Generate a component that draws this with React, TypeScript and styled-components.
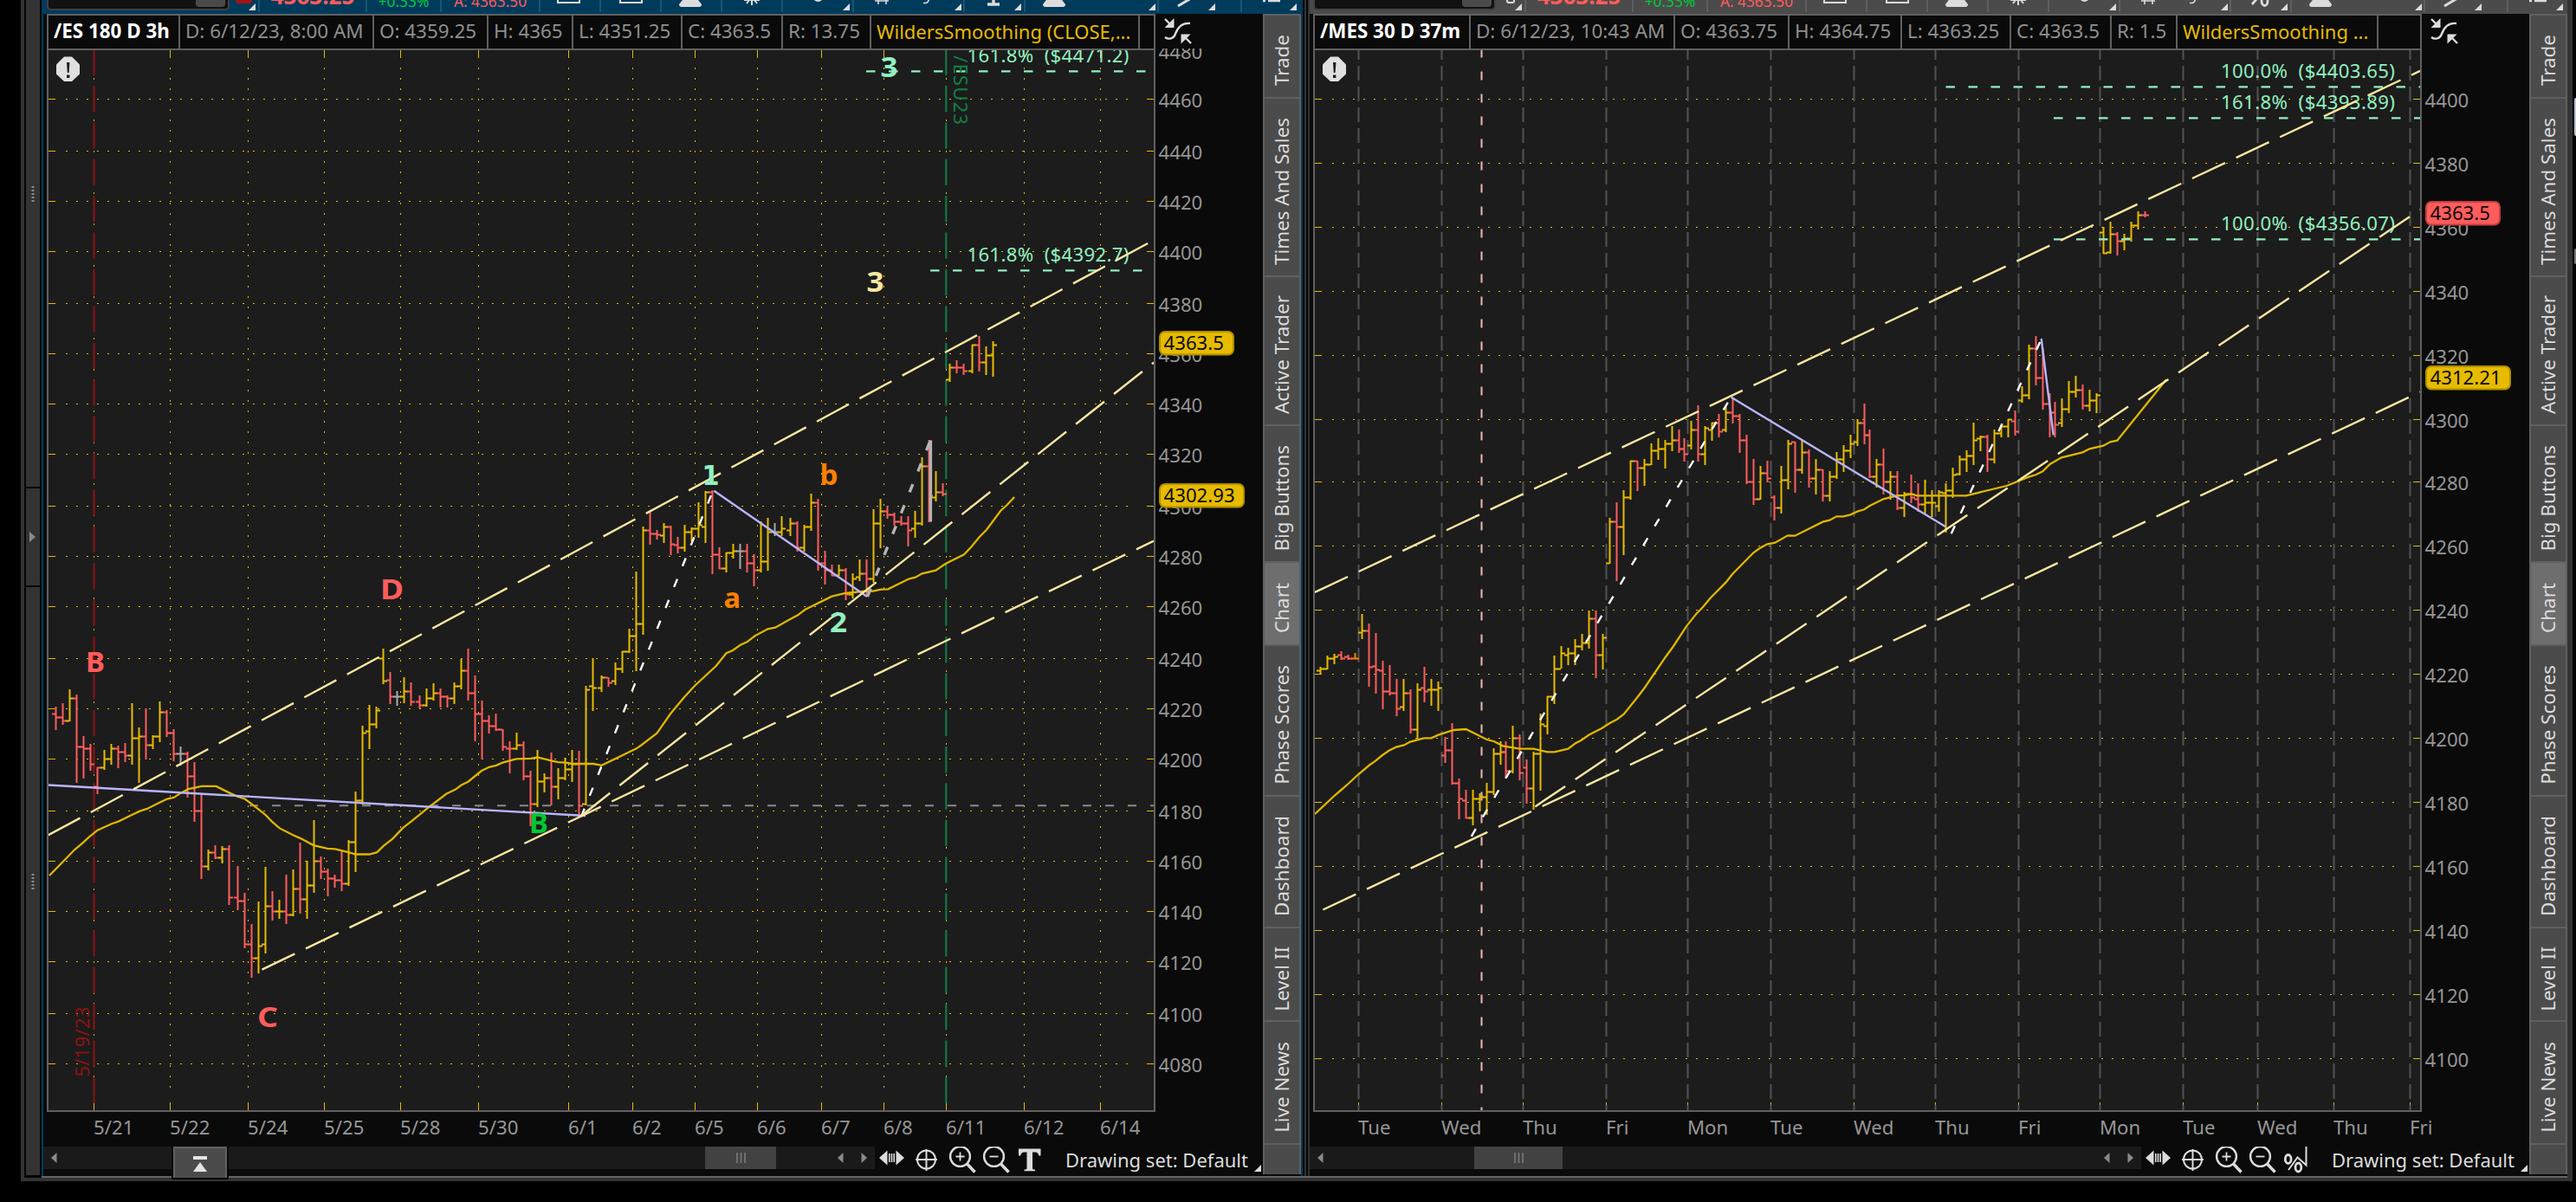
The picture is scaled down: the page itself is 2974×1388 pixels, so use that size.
import React from 'react'
import styled, { createGlobalStyle } from 'styled-components'

const GOLD = '#e6bb00'
const RED = '#ff5c5c'
const MINT = '#90f0c0'
const CREAM = '#f8e7a0'
const LILAC = '#b9b5ff'

const GlobalStyle = createGlobalStyle`
  body {
    margin: 0;
    background: #000;
    font-family: "Noto Sans", "Open Sans", sans-serif;
    overflow: hidden;
  }
`

const Screen = styled.div`
  display: flex;
  width: 2974px;
  height: 1388px;
  padding-left: 24px;
  box-sizing: border-box;
  background: #000;
`

const Frame = styled.div`
  display: flex;
  box-sizing: border-box;
  width: 2946px;
  height: 1364px;
  padding-left: 2px;
  border: solid #333;
  border-width: 0 6px 4px 4px;
  background: #050505;
`

const EdgeColumn = styled.div`
  display: flex;
  flex-direction: column;
  gap: 130px;
  padding: 113px 0 0 2px;
`

const EdgePiece = styled.div<{ $h: number; $color: string }>`
  width: 2px;
  height: ${({ $h }) => $h}px;
  background: ${({ $color }) => $color};
  border-radius: 2px 0 0 2px;
`

const Strip = styled.div`
  display: flex;
  flex-direction: column;
  gap: 2px;
  width: 16px;
  height: 1357px;
  margin-right: 2px;
`

const StripPart = styled.div<{ $h: number; $pb?: number }>`
  display: flex;
  align-items: center;
  justify-content: center;
  box-sizing: border-box;
  height: ${({ $h }) => $h}px;
  padding-bottom: ${({ $pb = 0 }) => $pb}px;
  background: #333;
`

const Windows = styled.div`
  display: flex;
  height: 1358px;
  border-bottom: 2px solid #646464;
`

const Divider = styled.div`
  width: 8px;
  background: linear-gradient(90deg, #050505 0 2px, #333 2px 4px, #050505 4px 6px, #333 6px 8px);
`

const Window = styled.div<{ $active?: boolean }>`
  width: 1452px;
  border: solid #003b5c;
  border-width: ${({ $active }) => ($active ? '0 2px' : '0')};
  background: #0a0a0a;
`

const Toolbar = styled.div<{ $active?: boolean }>`
  --line: ${({ $active }) => ($active ? '#1c5374' : '#5e5e5e')};
  display: flex;
  height: 16px;
  padding-left: 4px;
  box-sizing: border-box;
  overflow: hidden;
  background: ${({ $active }) => ($active ? '#003b5c' : '#4b4b4b')};
`

const SymbolBox = styled.div`
  display: flex;
  justify-content: flex-end;
  box-sizing: border-box;
  width: 211px;
  height: 12px;
  padding-right: 3px;
  border: solid #424242;
  border-width: 0 2px 2px;
  border-radius: 0 0 5px 5px;
  background: #111;
`

const SymbolButton = styled.div`
  width: 34px;
  height: 8px;
  border-radius: 0 0 4px 4px;
  background: #4a4a4a;
`

const ToolCell = styled.div<{ $w: number; $last?: boolean }>`
  display: flex;
  align-items: flex-end;
  justify-content: center;
  box-sizing: border-box;
  width: ${({ $w }) => $w}px;
  height: 14px;
  overflow: hidden;
  border-right: ${({ $last }) => ($last ? 0 : 2)}px solid var(--line);
`

const Quote = styled.span<{ $size: number; $lift: number; $color: string; $bold?: boolean }>`
  flex: none;
  font-size: ${({ $size }) => $size}px;
  font-weight: ${({ $bold }) => ($bold ? 700 : 400)};
  line-height: 20px;
  margin-bottom: ${({ $lift }) => $lift}px;
  color: ${({ $color }) => $color};
  white-space: nowrap;
`

const Body = styled.div`
  display: flex;
`

const Main = styled.div`
  width: 1408px;
`

const HeaderRow = styled.div`
  display: flex;
  height: 40px;
  padding-left: 4px;
`

const HeaderBar = styled.div`
  display: flex;
  box-sizing: border-box;
  width: 1280px;
  border: 2px solid #606060;
  border-bottom: 0;
`

const HeaderCell = styled.div<{ $w: number; $kind?: 'title' | 'study' }>`
  box-sizing: border-box;
  width: ${({ $w }) => $w}px;
  padding-left: 6px;
  border-right: 2px solid #606060;
  font-size: ${({ $kind }) => ($kind === 'study' ? 22 : 22.4)}px;
  line-height: 36px;
  white-space: pre;
  overflow: hidden;
  font-weight: ${({ $kind }) => ($kind === 'title' ? 700 : 400)};
  color: ${({ $kind }) => ($kind === 'title' ? '#fff' : $kind === 'study' ? GOLD : '#8f8f8f')};
`

const CollapseIcon = styled.svg`
  margin: 4px 0 0 9px;
`

const ChartCanvas = styled.svg`
  display: block;
  margin-left: 4px;
`

const Tabs = styled.div`
  display: flex;
  flex-direction: column;
  box-sizing: border-box;
  width: 44px;
  height: 1340px;
  border: solid #606060;
  border-width: 2px 2px 0;
  background: #4b4b4b;
`

const Tab = styled.div<{ $h: number; $active?: boolean }>`
  display: flex;
  align-items: center;
  justify-content: center;
  box-sizing: border-box;
  height: ${({ $h }) => $h}px;
  padding-top: 10px;
  border-bottom: 2px solid #606060;
  background: ${({ $active }) => ($active ? '#6e6e6e' : '#4b4b4b')};
`

const TabLabel = styled.span`
  writing-mode: vertical-rl;
  transform: rotate(180deg);
  font-size: 22.4px;
  line-height: 40px;
  color: #dcdcdc;
  white-space: nowrap;
`

const BottomBar = styled.div`
  display: flex;
  height: 34px;
`

const ScrollTrack = styled.div`
  display: flex;
  align-items: center;
  width: 960px;
  height: 26px;
  background: #1a1a1a;
`

const Thumb = styled.div<{ $w: number; $ml: number }>`
  display: flex;
  align-items: center;
  justify-content: center;
  width: ${({ $w }) => $w}px;
  height: 26px;
  margin: 0 auto 0 ${({ $ml }) => $ml}px;
  background: #424242;
`

const ExpandButton = styled.div`
  display: flex;
  align-items: center;
  justify-content: center;
  align-self: flex-start;
  box-sizing: border-box;
  width: 62px;
  height: 36px;
  margin-left: 134px;
  border: 2px solid #606060;
  border-bottom: 0;
  outline: 2px solid #0a0a0a;
  background: #4b4b4b;
`

const ToolIcon = styled.svg<{ $ml: number }>`
  flex: none;
  margin-left: ${({ $ml }) => $ml}px;
`

const DrawingSet = styled.div`
  width: 218px;
  margin-left: 26px;
  padding-top: 1px;
  font-size: 22px;
  line-height: 28px;
  color: #dcdcdc;
  white-space: nowrap;
`

/* ---------- chart data: [x, high, low, open, close, tone] in canvas pixels ---------- */

type Tone = 'u' | 'd' | 'n' | 'o'
type Bar = [number, number, number, number, number, Tone]
type Seg = [number, number, number, number]

const TONES: Record<Tone, string> = { u: GOLD, d: RED, n: '#aaa', o: '#ff8000' }

const esBars: Bar[] = [
  [64, 816, 843, 824, 828, 'd'], [72, 812, 837, 828, 832, 'd'], [80, 796, 833, 832, 806, 'u'],
  [88, 802, 904, 806, 862, 'd'], [96, 850, 899, 862, 864, 'd'], [104, 859, 890, 864, 882, 'd'],
  [112, 886, 917, 908, 886, 'd'], [120, 866, 889, 886, 876, 'u'], [128, 859, 883, 876, 864, 'u'],
  [136, 861, 887, 864, 868, 'd'], [144, 858, 880, 868, 872, 'd'], [152, 812, 883, 872, 852, 'u'],
  [160, 840, 904, 852, 850, 'u'], [168, 818, 877, 850, 860, 'd'], [176, 849, 865, 860, 850, 'u'],
  [184, 810, 857, 850, 822, 'u'], [192, 820, 851, 822, 846, 'd'], [200, 842, 879, 846, 870, 'd'],
  [208, 862, 884, 870, 870, 'n'], [216, 868, 921, 870, 896, 'd'], [224, 880, 949, 896, 936, 'd'],
  [232, 917, 1015, 936, 1000, 'd'], [240, 981, 1005, 1000, 984, 'u'], [248, 976, 992, 984, 990, 'd'],
  [256, 977, 997, 990, 980, 'u'], [264, 976, 1045, 980, 1036, 'd'], [274, 1000, 1051, 1036, 1040, 'd'],
  [282, 1031, 1095, 1040, 1090, 'd'], [290, 1067, 1129, 1090, 1106, 'd'], [298, 1041, 1124, 1106, 1092, 'u'],
  [306, 1001, 1101, 1090, 1046, 'u'], [314, 1029, 1063, 1046, 1052, 'd'], [322, 1039, 1061, 1052, 1052, 'u'],
  [330, 1010, 1067, 1052, 1056, 'd'], [338, 1004, 1058, 1056, 1026, 'u'], [346, 973, 1055, 1026, 1038, 'd'],
  [354, 994, 1061, 1038, 1022, 'u'], [362, 947, 1031, 1022, 994, 'u'], [370, 989, 1015, 994, 1006, 'd'],
  [378, 1003, 1035, 1006, 1014, 'd'], [386, 1010, 1025, 1014, 1016, 'd'], [394, 983, 1029, 1016, 1020, 'd'],
  [402, 970, 1023, 1020, 972, 'u'], [410, 914, 1007, 972, 924, 'u'], [418, 838, 929, 924, 846, 'u'],
  [426, 814, 865, 844, 836, 'u'], [434, 816, 841, 836, 820, 'u'], [442, 749, 790, 760, 786, 'u'],
  [450, 776, 813, 785, 804, 'd'], [458, 798, 815, 804, 804, 'n'], [466, 782, 812, 804, 798, 'u'],
  [474, 788, 815, 798, 810, 'd'], [484, 803, 818, 810, 814, 'd'], [492, 795, 816, 814, 806, 'u'],
  [500, 789, 809, 806, 800, 'u'], [508, 795, 817, 800, 804, 'd'], [516, 803, 817, 804, 806, 'd'],
  [524, 788, 813, 806, 792, 'u'], [532, 761, 796, 792, 774, 'u'], [540, 749, 809, 774, 800, 'd'],
  [548, 780, 856, 800, 824, 'd'], [556, 809, 877, 824, 832, 'd'], [564, 826, 847, 832, 838, 'd'],
  [572, 824, 844, 838, 842, 'd'], [580, 842, 867, 842, 862, 'd'], [588, 856, 893, 864, 864, 'd'],
  [596, 846, 866, 864, 860, 'u'], [604, 856, 901, 860, 896, 'd'], [612, 890, 954, 896, 928, 'd'],
  [620, 866, 932, 928, 902, 'u'], [628, 893, 915, 902, 898, 'u'], [636, 869, 930, 898, 908, 'd'],
  [644, 887, 923, 908, 898, 'u'], [652, 875, 901, 898, 888, 'u'], [660, 866, 903, 888, 882, 'u'],
  [668, 867, 942, 882, 930, 'd'], [676, 792, 930, 928, 796, 'u'], [684, 760, 821, 792, 794, 'u'],
  [694, 780, 799, 794, 782, 'u'], [702, 782, 793, 782, 788, 'd'], [710, 765, 791, 786, 772, 'u'],
  [718, 752, 777, 772, 752, 'u'], [726, 726, 754, 752, 734, 'u'], [734, 660, 775, 734, 720, 'u'],
  [742, 608, 733, 720, 612, 'u'], [750, 591, 629, 612, 616, 'd'], [758, 612, 623, 616, 617, 'd'],
  [766, 604, 627, 618, 608, 'u'], [774, 607, 641, 608, 628, 'd'], [782, 620, 639, 629, 632, 'd'],
  [790, 606, 637, 632, 614, 'u'], [798, 609, 625, 614, 610, 'u'], [806, 580, 621, 610, 606, 'u'],
  [814, 567, 627, 608, 568, 'u'], [822, 566, 663, 568, 640, 'd'], [830, 632, 657, 640, 656, 'd'],
  [838, 638, 661, 656, 638, 'u'], [846, 628, 645, 638, 636, 'u'], [854, 628, 657, 636, 636, 'n'],
  [862, 628, 661, 636, 650, 'd'], [870, 640, 677, 650, 658, 'd'], [878, 602, 661, 658, 648, 'u'],
  [886, 598, 659, 648, 614, 'u'], [894, 604, 619, 614, 614, 'n'], [902, 596, 619, 614, 610, 'u'],
  [912, 598, 619, 612, 604, 'u'], [920, 602, 637, 604, 632, 'd'], [928, 606, 637, 632, 608, 'u'],
  [936, 570, 613, 608, 580, 'u'], [944, 576, 659, 580, 650, 'd'], [952, 636, 675, 650, 658, 'd'],
  [960, 652, 665, 658, 664, 'd'], [968, 652, 665, 664, 658, 'u'], [976, 656, 693, 658, 686, 'd'],
  [984, 662, 691, 686, 668, 'u'], [992, 646, 671, 666, 662, 'u'], [1000, 646, 688, 662, 668, 'd'],
  [1008, 588, 673, 668, 604, 'u'], [1016, 576, 633, 604, 590, 'u'], [1024, 584, 599, 590, 594, 'd'],
  [1032, 592, 607, 594, 602, 'd'], [1040, 596, 607, 602, 604, 'd'], [1048, 596, 631, 604, 612, 'd'],
  [1056, 590, 621, 610, 604, 'u'], [1064, 528, 607, 604, 538, 'u'], [1072, 508, 603, 538, 572, 'd'],
  [1080, 544, 579, 574, 568, 'u'], [1088, 558, 573, 568, 570, 'd'], [1096, 420, 441, 438, 424, 'u'],
  [1104, 416, 431, 424, 424, 'd'], [1112, 420, 433, 424, 428, 'd'], [1122, 398, 431, 428, 398, 'u'],
  [1130, 388, 429, 398, 418, 'd'], [1138, 400, 433, 418, 410, 'u'], [1146, 394, 435, 410, 398, 'u'],
]

const mesBars: Bar[] = [
  [1524, 770, 779, 774, 772, 'u'], [1532, 757, 773, 772, 760, 'u'], [1540, 755, 767, 760, 758, 'u'],
  [1548, 752, 762, 756, 760, 'd'], [1556, 756, 762, 758, 760, 'd'], [1564, 754, 761, 760, 760, 'o'],
  [1572, 709, 738, 730, 728, 'u'], [1580, 720, 793, 728, 770, 'd'], [1588, 731, 801, 769, 773, 'd'],
  [1596, 763, 819, 774, 798, 'd'], [1604, 768, 803, 798, 800, 'd'], [1612, 784, 827, 800, 818, 'd'],
  [1620, 784, 821, 816, 800, 'u'], [1628, 796, 847, 800, 842, 'd'], [1636, 789, 853, 842, 796, 'u'],
  [1644, 770, 811, 794, 798, 'd'], [1652, 784, 815, 796, 796, 'u'], [1660, 787, 821, 796, 794, 'u'],
  [1668, 851, 881, 872, 866, 'd'], [1676, 835, 906, 866, 904, 'd'], [1684, 899, 946, 904, 922, 'd'],
  [1692, 912, 945, 924, 944, 'd'], [1700, 912, 953, 944, 922, 'u'], [1708, 916, 937, 922, 920, 'u'],
  [1716, 904, 941, 920, 914, 'u'], [1724, 864, 918, 914, 870, 'u'], [1732, 856, 883, 870, 868, 'u'],
  [1738, 856, 899, 868, 890, 'd'], [1746, 838, 893, 890, 852, 'u'], [1754, 848, 901, 852, 892, 'd'],
  [1762, 877, 928, 886, 910, 'd'], [1770, 868, 935, 910, 870, 'u'], [1778, 824, 913, 870, 836, 'u'],
  [1786, 804, 848, 838, 804, 'u'], [1794, 757, 813, 804, 772, 'u'], [1802, 746, 772, 772, 754, 'u'],
  [1810, 748, 768, 756, 754, 'u'], [1818, 738, 768, 754, 746, 'u'], [1826, 732, 751, 746, 742, 'u'],
  [1834, 705, 749, 742, 714, 'u'], [1842, 705, 783, 714, 756, 'd'], [1850, 732, 773, 756, 736, 'u'],
  [1858, 598, 651, 650, 602, 'u'], [1866, 580, 671, 602, 608, 'd'], [1874, 566, 641, 608, 574, 'u'],
  [1882, 532, 577, 574, 532, 'u'], [1890, 532, 567, 532, 540, 'd'], [1898, 530, 561, 540, 536, 'u'],
  [1906, 512, 537, 536, 520, 'u'], [1914, 506, 531, 520, 518, 'u'], [1922, 508, 541, 518, 512, 'u'],
  [1930, 492, 521, 512, 508, 'u'], [1938, 496, 523, 508, 518, 'd'], [1944, 506, 533, 518, 524, 'd'],
  [1952, 486, 519, 514, 496, 'u'], [1960, 468, 533, 496, 524, 'd'], [1968, 492, 537, 524, 494, 'u'],
  [1976, 488, 509, 496, 488, 'u'], [1984, 478, 505, 488, 498, 'd'], [1992, 469, 499, 496, 476, 'u'],
  [2000, 460, 489, 476, 480, 'd'], [2008, 478, 523, 480, 508, 'd'], [2016, 502, 559, 508, 556, 'd'],
  [2024, 530, 583, 556, 576, 'd'], [2032, 538, 577, 576, 546, 'u'], [2040, 532, 557, 546, 552, 'd'],
  [2048, 572, 601, 574, 586, 'd'], [2056, 538, 593, 586, 554, 'u'], [2064, 508, 565, 554, 512, 'u'],
  [2072, 510, 569, 510, 542, 'd'], [2080, 508, 547, 542, 522, 'u'], [2088, 519, 563, 522, 552, 'd'],
  [2096, 530, 571, 552, 542, 'u'], [2104, 542, 579, 542, 572, 'd'], [2112, 544, 579, 572, 550, 'u'],
  [2120, 522, 553, 550, 530, 'u'], [2128, 514, 545, 530, 520, 'u'], [2136, 502, 529, 520, 512, 'u'],
  [2144, 484, 515, 510, 488, 'u'], [2152, 466, 513, 488, 502, 'd'], [2158, 496, 552, 502, 550, 'd'],
  [2166, 530, 563, 550, 536, 'u'], [2174, 518, 571, 536, 556, 'd'], [2182, 544, 577, 556, 550, 'u'],
  [2190, 544, 589, 550, 586, 'd'], [2198, 568, 597, 586, 570, 'u'], [2206, 548, 581, 570, 574, 'd'],
  [2214, 558, 591, 576, 582, 'd'], [2222, 554, 593, 582, 580, 'u'], [2230, 566, 597, 580, 580, 'u'],
  [2238, 566, 591, 584, 568, 'u'], [2246, 558, 615, 569, 566, 'u'], [2254, 540, 575, 566, 548, 'u'],
  [2262, 526, 549, 547, 530, 'u'], [2270, 520, 545, 530, 526, 'u'], [2278, 488, 537, 526, 508, 'u'],
  [2286, 503, 521, 506, 504, 'u'], [2294, 502, 545, 504, 530, 'd'], [2302, 496, 535, 530, 500, 'u'],
  [2310, 491, 505, 500, 492, 'u'], [2318, 484, 505, 492, 484, 'u'], [2326, 474, 503, 486, 498, 'd'],
  [2334, 446, 465, 462, 456, 'u'], [2342, 398, 461, 456, 402, 'u'], [2350, 388, 445, 402, 436, 'd'],
  [2358, 402, 473, 436, 466, 'd'], [2366, 454, 505, 466, 476, 'd'], [2372, 464, 505, 476, 490, 'd'],
  [2380, 460, 493, 488, 472, 'u'], [2388, 440, 477, 472, 452, 'u'], [2396, 434, 459, 452, 450, 'u'],
  [2404, 444, 473, 450, 468, 'd'], [2412, 450, 475, 468, 462, 'u'], [2420, 454, 477, 462, 456, 'u'],
  [2428, 262, 293, 268, 292, 'u'], [2436, 256, 293, 291, 270, 'u'], [2444, 268, 295, 270, 278, 'd'],
  [2452, 270, 289, 278, 275, 'u'], [2460, 256, 279, 275, 260, 'u'], [2468, 244, 265, 260, 248, 'u'],
  [2476, 244, 251, 248, 248, 'd'],
]

const esAverage =
  '57,1011 72.7,995 86.3,981 95.5,973.3 102.8,966.7 112.5,958.7 129,951.2 137.2,948.4 151.7,941.3 161.4,936.6 169.2,934.2 185.2,926.2 193,922.5 200.7,921 208.4,915.9 217.6,911.2 232.7,907.9 249.6,907.9 257.9,912.1 266.6,916.4 273.9,919.6 282.6,922.5 290.8,928.6 298.6,934.7 306.3,940.8 314.1,948.8 322.8,956.4 339.3,964.8 347,968.1 362,976.1 378,979.9 386.8,980.4 402.3,984.1 410.5,986.5 426.5,986.5 435.3,984.1 443,976.6 453.2,968.6 465.3,955.9 475,948.4 493.4,933.3 515.2,916.8 525.9,911.6 532.7,906.5 540.4,902.7 556,890 564.7,885.8 572.9,883.9 580.2,880.6 596.2,876.4 613.1,875.9 620.4,874.5 637.4,878.7 644.6,880.1 653.4,880.6 660.2,882 684.9,882 694.6,883.9 734.3,864.6 740,860.7 758.4,846.7 774.2,824 790,805 802.2,791.7 826.7,769 838.5,754.3 845.6,751.3 854.8,744.7 862.4,741.3 871.6,734.3 886.4,726.3 895.1,724.7 910.9,715.7 921.1,710.3 929.3,704 960.4,688.7 976.2,685 1000.7,682.3 1007.8,682.7 1017,680.7 1025.2,680.3 1049.7,668.3 1056.8,666.7 1064.5,662.3 1080.3,658.7 1092,650.7 1113,640.3 1121.6,631.3 1130.8,620 1139,611.7 1155.3,589.7 1162.4,583.3 1171.1,574'

const mesAverage =
  '1518,940 1541.5,918 1548.6,912 1556.6,905 1568.4,894 1581,883.5 1588,878.7 1596,872 1604,866.5 1612,862.7 1621,860.4 1628,856.6 1644,852.4 1652.4,852.4 1660.5,848.6 1678.4,843 1692.5,842 1708.6,850 1716.6,854 1724.6,856 1735,861.3 1754.4,864.6 1770.4,864.6 1786.4,868.4 1794.5,868.4 1810.5,864.6 1818.5,858.5 1825.6,854.7 1834.6,848.6 1849.2,841 1858.6,835 1866.7,830.7 1874.7,824.6 1890.7,804.8 1899.2,793.5 1922.8,758.7 1931.8,746.5 1946.9,723.4 1958.7,708.4 1965.8,701.3 1974.7,690.5 1992.6,672.4 2000,663 2024.3,638.3 2031.7,633 2040.3,628.3 2049.3,626.7 2064,618.3 2072.3,618.7 2104.3,602.7 2112.3,600.7 2120.3,596.3 2128.3,596.3 2136.3,594.3 2144.3,590.7 2152.3,588.3 2158.3,584.3 2174.3,576.3 2190,572.3 2198.3,572 2206.7,570.3 2213,572.3 2270,572.3 2316.7,561 2342.3,550.7 2350.3,548.3 2358.3,544.3 2366.7,536 2380,528.3 2404.3,522.3 2412.3,518.3 2428.3,514.7 2436.3,510.3 2444.3,508.7 2501,438.3'

interface Note {
  x: number
  y: number
  text: string
  color: string
  w: number
  dejavu?: boolean
}

interface ChartSpec {
  x0: number
  active?: boolean
  header: { text: string; w: number; kind?: 'title' | 'study' }[]
  prices: [number, number][]
  dates: [number, string][]
  greyColumns?: boolean
  bars: Bar[]
  average: string
  trend: Seg[]
  lilac: Seg[]
  dashed: Seg[]
  fibs: { x: number; y: number; text: string; textX: number; w: number }[]
  notes: Note[]
  badges: { y: number; text: string; w: number; fill: string; edge: string }[]
  thumb: { ml: number; w: number }
}

const es: ChartSpec = {
  x0: 54,
  active: true,
  header: [
    { text: '/ES 180 D 3h', w: 152, kind: 'title' },
    { text: 'D: 6/12/23, 8:00 AM', w: 224 },
    { text: 'O: 4359.25', w: 132 },
    { text: 'H: 4365', w: 98 },
    { text: 'L: 4351.25', w: 126 },
    { text: 'C: 4363.5', w: 116 },
    { text: 'R: 13.75', w: 102 },
    { text: 'WildersSmoothing (CLOSE,...', w: 310, kind: 'study' },
  ],
  prices: [
    [4480, 58], [4460, 114], [4440, 174], [4420, 232], [4400, 290], [4380, 350], [4360, 408],
    [4340, 466], [4320, 524], [4300, 584], [4280, 642], [4260, 700], [4240, 760], [4220, 818],
    [4200, 876], [4180, 936], [4160, 994], [4140, 1052], [4120, 1110], [4100, 1170], [4080, 1228],
  ],
  dates: [
    [108, '5/21'], [196, '5/22'], [286, '5/24'], [374, '5/25'], [462, '5/28'], [552, '5/30'],
    [656, '6/1'], [730, '6/2'], [802, '6/5'], [874, '6/6'], [948, '6/7'], [1020, '6/8'],
    [1092, '6/11'], [1182, '6/12'], [1270, '6/14'],
  ],
  bars: esBars,
  average: esAverage,
  trend: [
    [55.5, 964.5, 1325.7, 280.7],
    [302.5, 1119.6, 1332, 624.7],
    [671.4, 941.8, 1332, 418.6],
  ],
  lilac: [
    [56, 906.5, 676, 942],
    [824.3, 566.7, 1001, 689],
  ],
  dashed: [[671, 943, 823, 567]],
  fibs: [
    { x: 1000, y: 82, text: '161.8%  ($4471.2)', textX: 1116.5, w: 187 },
    { x: 1074, y: 312, text: '161.8%  ($4392.7)', textX: 1116.5, w: 187 },
  ],
  notes: [
    { x: 99, y: 775.5, text: 'B', color: RED, w: 22 },
    { x: 439, y: 692, text: 'D', color: RED, w: 27 },
    { x: 297, y: 1186, text: 'C', color: RED, w: 24 },
    { x: 611, y: 961.5, text: 'B', color: '#00c832', w: 22 },
    { x: 810.5, y: 560, text: '1', color: MINT, w: 20, dejavu: true },
    { x: 958, y: 730, text: '2', color: MINT, w: 20 },
    { x: 1016.5, y: 88.5, text: '3', color: MINT, w: 20 },
    { x: 1000.5, y: 336.5, text: '3', color: CREAM, w: 20 },
    { x: 946.5, y: 560, text: 'b', color: '#ff8000', w: 21 },
    { x: 835.5, y: 702, text: 'a', color: '#ff8000', w: 19.5 },
  ],
  badges: [
    { y: 382, text: '4363.5', w: 86, fill: GOLD, edge: '#b08f00' },
    { y: 558, text: '4302.93', w: 98, fill: GOLD, edge: '#b08f00' },
  ],
  thumb: { ml: 552, w: 82 },
}

const mes: ChartSpec = {
  x0: 1516,
  header: [
    { text: '/MES 30 D 37m', w: 180, kind: 'title' },
    { text: 'D: 6/12/23, 10:43 AM', w: 236 },
    { text: 'O: 4363.75', w: 132 },
    { text: 'H: 4364.75', w: 130 },
    { text: 'L: 4363.25', w: 126 },
    { text: 'C: 4363.5', w: 116 },
    { text: 'R: 1.5', w: 76 },
    { text: 'WildersSmoothing ...', w: 232, kind: 'study' },
  ],
  prices: [
    [4400, 114], [4380, 188], [4360, 262], [4340, 336], [4320, 410], [4300, 484], [4280, 556],
    [4260, 630], [4240, 704], [4220, 778], [4200, 852], [4180, 926], [4160, 1000], [4140, 1074],
    [4120, 1148], [4100, 1222],
  ],
  dates: [
    [1568, 'Tue'], [1664, 'Wed'], [1758, 'Thu'], [1854, 'Fri'], [1948, 'Mon'], [2044, 'Tue'],
    [2140, 'Wed'], [2234, 'Thu'], [2330, 'Fri'], [2424, 'Mon'], [2520, 'Tue'], [2606, 'Wed'],
    [2694, 'Thu'], [2782, 'Fri'],
  ],
  greyColumns: true,
  bars: mesBars,
  average: mesAverage,
  trend: [
    [1518, 683.9, 2794, 81.9],
    [1772.3, 931.4, 2794, 242.1],
    [1527.4, 1050.5, 2794, 452.7],
  ],
  lilac: [
    [1998.7, 458.7, 2246.3, 608.3],
    [2356.7, 391, 2370.7, 502.3],
  ],
  dashed: [
    [1698.7, 965.8, 1997, 461],
    [2252.7, 616.3, 2356.7, 391.7],
  ],
  fibs: [
    { x: 2246.5, y: 100, text: '100.0%  ($4403.65)', textX: 2564, w: 201 },
    { x: 2371, y: 136, text: '161.8%  ($4393.89)', textX: 2564, w: 201 },
    { x: 2371, y: 276, text: '100.0%  ($4356.07)', textX: 2564, w: 201 },
  ],
  notes: [],
  badges: [
    { y: 232, text: '4363.5', w: 86, fill: RED, edge: '#c04040' },
    { y: 422, text: '4312.21', w: 98, fill: GOLD, edge: '#b08f00' },
  ],
  thumb: { ml: 166, w: 102 },
}

const tabs: [string, number][] = [
  ['Trade', 96], ['Times And Sales', 206], ['Active Trader', 172], ['Big Buttons', 158],
  ['Chart', 96], ['Phase Scores', 174], ['Dashboard', 152], ['Level II', 108], ['Live News', 142],
]

const Line: React.FC<{ s: Seg; color: string; w?: number; dash?: string }> = ({ s, color, w = 2.4, dash }) => (
  <line x1={s[0]} y1={s[1]} x2={s[2]} y2={s[3]} stroke={color} strokeWidth={w} strokeDasharray={dash} />
)

const Chart: React.FC<{ spec: ChartSpec }> = ({ spec }) => {
  const { x0 } = spec
  const left = x0 + 2
  const right = x0 + 1278
  const clip = `plot-${x0}`

  return (
    <ChartCanvas width={1404} height={1268} viewBox={`${x0} 56 1404 1268`} fontSize={22.2}>
      <clipPath id={clip}>
        <rect x={left} y={58} width={1276} height={1224} />
      </clipPath>
      <rect x={x0 + 1} y={57} width={1278} height={1226} fill="#1c1c1c" stroke="#606060" strokeWidth={2} />

      <g clipPath={`url(#${clip})`}>
        {spec.prices.filter(([, y]) => y > 60).map(([p, y]) => (
          <g key={p} stroke={GOLD}>
            <path d={`M${left} ${y + 0.5}h8M${right - 8} ${y + 0.5}h8`} />
            <path d={`M${left + 20} ${y + 0.5}H${right - 28}`} strokeDasharray="2 10" />
          </g>
        ))}
        {spec.dates.map(([x]) => (
          <g key={x} stroke={GOLD}>
            {!spec.greyColumns && <path d={`M${x + 0.5} 58v9`} />}
            <path d={`M${x + 0.5} 1273v9`} />
            {!spec.greyColumns && <path d={`M${x + 0.5} 78V1257`} strokeDasharray="2 10" />}
            {spec.greyColumns && (
              <path d={`M${x + 0.5} 52V1282`} stroke="#525252" strokeWidth={2} strokeDasharray="17 7" />
            )}
          </g>
        ))}

        {spec.active ? (
          <>
            <Line s={[108.5, 56.6, 108.5, 1274]} color="#8e1212" w={2} dash="30.2 12.2" />
            <Line s={[1092.3, 56.6, 1092.3, 1274]} color="#0f8045" w={2} dash="30.2 12.2" />
            <Line s={[288, 930.2, 1332, 930.2]} color="#8a8a8a" w={2} dash="10 16" />
          </>
        ) : (
          <Line s={[1710.5, 56.4, 1710.5, 1282]} color="#f0b8b0" w={2} dash="10 16" />
        )}

        {spec.bars.map(([x, h, l, o, c, tone]) => (
          <path
            key={x}
            d={`M${x + 0.5} ${h}V${l}M${x - 4} ${o + 0.5}H${x}M${x} ${c + 0.5}H${x + 5}`}
            fill="none"
            stroke={TONES[tone]}
            strokeWidth={2}
          />
        ))}
        <polyline points={spec.average} fill="none" stroke="#e0b700" strokeWidth={2.3} />
        {spec.lilac.map((s) => <Line key={s[0]} s={s} color={LILAC} />)}
        {spec.dashed.map((s) => <Line key={s[0]} s={s} color="#fff" dash="10 16" />)}
        {spec.active && (
          <>
            <Line s={[1001.5, 689, 1074.3, 508.4]} color="#b4b4b4" w={3.4} dash="10 16" />
            <Line s={[1074.4, 508.4, 1074.4, 602.5]} color="#b4b4b4" w={3.4} />
          </>
        )}

        {spec.fibs.map((f) => (
          <g key={f.y}>
            <Line s={[f.x, f.y + 0.4, right, f.y + 0.4]} color={MINT} w={2.2} dash="10.5 15.5" />
            <text x={f.textX} y={f.y - 10.2} fill={MINT} textLength={f.w} xmlSpace="preserve">
              {f.text}
            </text>
          </g>
        ))}
        {spec.trend.map((s) => <Line key={s[0]} s={s} color={CREAM} dash="42 14" />)}

        {spec.notes.map((n) => (
          <text
            key={`${n.text}${n.x}`}
            x={n.x}
            y={n.y}
            fill={n.color}
            fontSize={32}
            fontWeight={700}
            fontFamily={n.dejavu ? '"DejaVu Sans"' : '"Noto Sans"'}
            textLength={n.w}
            lengthAdjust="spacingAndGlyphs"
          >
            {n.text}
          </text>
        ))}

        {spec.active && (
          <>
            <text transform="translate(103 1243.5) rotate(-90)" fill="#8e1212" textLength={81}>5/19/23</text>
            <text transform="translate(1101 64) rotate(90)" fill="#0f8045" textLength={80}>/ESU23</text>
          </>
        )}

        <path
          d={`M${x0 + 20} 65.5h9l9 9v11l-9 8.5h-9l-9 -8.5v-11z`}
          fill="#e0e0e0"
        />
        <path d={`M${x0 + 23} 72h3.4l-.8 12h-1.8z M${x0 + 23} 86.5h3.4v3.4h-3.4z`} fill="#1c1c1c" />
      </g>

      <g fill="#969696">
        {spec.prices.map(([p, y]) => (
          <text key={p} x={x0 + 1283.5} y={y + 10}>{p}</text>
        ))}
        {spec.dates.map(([x, d]) => (
          <text key={x} x={x} y={1310}>{d}</text>
        ))}
      </g>
      {spec.badges.map((b) => (
        <g key={b.y}>
          <rect x={x0 + 1285} y={b.y + 1} width={b.w - 1} height={26.5} rx={6} fill={b.fill} stroke={b.edge} strokeWidth={2} />
          <text x={x0 + 1289.5} y={b.y + 22} fill="#0a0a0a">{b.text}</text>
        </g>
      ))}
    </ChartCanvas>
  )
}

const Corner = ({ x }: { x: number }) => <path d={`M${x + 8} 4v8h-8z`} fill="#dcdcdc" />

/* an icon strip that hangs from the top edge of the window */
const CellArt: React.FC<{ w: number; children: React.ReactNode }> = ({ w, children }) => (
  <svg width={w} height={14} fill="none" stroke="#dcdcdc" strokeWidth={2}>{children}</svg>
)

const Flask = ({ x }: { x: number }) => (
  <path d={`M${x - 6} -4h12l7 9q0 3 -3 3h-20q-3 0 -3 -3z`} fill="#dcdcdc" stroke="none" />
)

const TopToolbar: React.FC<{ active?: boolean }> = ({ active }) => (
  <Toolbar $active={active}>
    <SymbolBox>
      <SymbolButton />
    </SymbolBox>
    <ToolCell $w={35}>
      <CellArt w={33}>
        {active ? (
          <rect x={7} y={-8} width={19} height={12} rx={3} fill="#a01414" stroke="none" />
        ) : (
          <rect x={13} y={-8} width={8} height={11} rx={2} />
        )}
        <g stroke="none"><Corner x={22} /></g>
      </CellArt>
    </ToolCell>
    <ToolCell $w={124}>
      <Quote $size={26} $lift={9} $color={RED} $bold>4363.25</Quote>
    </ToolCell>
    <ToolCell $w={86}>
      <Quote $size={17.3} $lift={2.5} $color="#00c83c">+0.33%</Quote>
    </ToolCell>
    <ToolCell $w={114}>
      <Quote $size={17.3} $lift={2.5} $color={RED}>A: 4363.50</Quote>
    </ToolCell>
    <ToolCell $w={70}>
      <CellArt w={68}><rect x={20} y={-10} width={25} height={13} /></CellArt>
    </ToolCell>
    <ToolCell $w={70}>
      <CellArt w={68}><rect x={22} y={-10} width={25} height={13} /></CellArt>
    </ToolCell>
    <ToolCell $w={70}>
      <CellArt w={68}><Flask x={33} /></CellArt>
    </ToolCell>
    <ToolCell $w={70}>
      <CellArt w={68}><path d="M34 0v6M31 0l-3 4M37 0l3 4M25 0h18" /></CellArt>
    </ToolCell>
    <ToolCell $w={82}>
      <CellArt w={80}><path d="M36 -4a4.5 4.5 0 0 0 9 0" strokeWidth={3} /><g stroke="none"><Corner x={69} /></g></CellArt>
    </ToolCell>
    <ToolCell $w={128}>
      <CellArt w={126}>
        <path d="M28 0v5M37 0v5M24 1h16M87 -3q-1 6 -4 6.500h-3" strokeWidth={1.6} />
        <g stroke="none"><Corner x={116} /></g>
      </CellArt>
    </ToolCell>
    <ToolCell $w={70}>
      <CellArt w={68}>
        {active ? (
          <path d="M33 -4v9M26 5h14" strokeWidth={3.4} />
        ) : (
          <path d="M24 5L36 -9M35 -3v4.500a3.500 5 0 0 0 7 0v-4.500a3.500 5 0 0 0 -7 0" strokeWidth={2.800} />
        )}
        <g stroke="none"><Corner x={57} /></g>
      </CellArt>
    </ToolCell>
    <ToolCell $w={154}>
      <CellArt w={152}><Flask x={33} /><g stroke="none"><Corner x={142} /></g></CellArt>
    </ToolCell>
    <ToolCell $w={96}>
      <CellArt w={94}><path d="M22 7L42 -5" strokeWidth={3} /><g stroke="none"><Corner x={57} /></g></CellArt>
    </ToolCell>
    <ToolCell $w={68} $last>
      <CellArt w={68}><path d="M24 1h3M30 1h14" strokeWidth={2.4} /><g stroke="none"><Corner x={55} /></g></CellArt>
    </ToolCell>
  </Toolbar>
)

const Arrow: React.FC<{ dir: 'left' | 'right'; ml: number }> = ({ dir, ml }) => (
  <ToolIcon $ml={ml} width={7} height={12}>
    <path d={dir === 'left' ? 'M6.500 0v12L0 6z' : 'M.5 0v12L7 6z'} fill="#8a8a8a" />
  </ToolIcon>
)

const Magnifier: React.FC<{ plus?: boolean; ml: number }> = ({ plus, ml }) => (
  <ToolIcon $ml={ml} width={32} height={32} fill="none" stroke="#dcdcdc" strokeWidth={2.4}>
    <circle cx={13.500} cy={11.500} r={11.400} />
    <path d="M21.500 20l9 9.500" strokeWidth={3.4} />
    <path d={plus ? 'M8.500 11.500h10M13.500 6.500v10' : 'M8.500 11.500h10'} strokeWidth={1.800} />
  </ToolIcon>
)

const BottomTools: React.FC<{ active?: boolean }> = ({ active }) => (
  <>
    <ToolIcon $ml={5} width={29} height={26}>
      <path d="M9.500 4.500v17L0 13zM19.500 4.500v17L29 13zM11 8h1.600v10H11zM13.700 8h1.600v10h-1.600zM16.400 8H18v10h-1.600z" fill="#dcdcdc" />
    </ToolIcon>
    <ToolIcon $ml={13} width={25} height={30} fill="none" stroke="#dcdcdc" strokeWidth={2}>
      <circle cx={12.500} cy={15} r={10.500} />
      <path d="M12.500 3v25M0 15h25" />
    </ToolIcon>
    <Magnifier plus ml={13} />
    <Magnifier ml={7} />
    {active ? (
      <ToolIcon $ml={10} width={28} height={30}>
        <path d="M0 2.500h25.500v8h-2.200q-.8 -4 -4 -4h-3.300v18.500q0 1.600 3 1.600v1.700h-12.500v-1.700q3 0 3 -1.600v-18.500h-3.300q-3.200 0 -4 4h-2.200z" fill="#dcdcdc" />
      </ToolIcon>
    ) : (
      <ToolIcon $ml={9} width={29} height={32} fill="none" stroke="#dcdcdc" strokeWidth={2}>
        <ellipse cx={4.700} cy={14.500} rx={3.400} ry={5} strokeWidth={2.800} />
        <ellipse cx={16.400} cy={24} rx={3.400} ry={5} strokeWidth={2.800} />
        <path d="M5 27L15.500 12.500L25.500 21.500V0" />
      </ToolIcon>
    )}
    <DrawingSet>Drawing set: Default</DrawingSet>
    <svg width={8} height={30}>
      <path d="M8 21v8H0z" fill="#dcdcdc" />
    </svg>
  </>
)

const TradingWindow: React.FC<{ spec: ChartSpec }> = ({ spec }) => (
  <Window $active={spec.active}>
    <TopToolbar active={spec.active} />
    <Body>
      <Main>
        <HeaderRow>
          <HeaderBar>
            {spec.header.map((h) => (
              <HeaderCell key={h.text} $w={h.w} $kind={h.kind}>{h.text}</HeaderCell>
            ))}
          </HeaderBar>
          <CollapseIcon width={34} height={32} fill="none" stroke="#dcdcdc" strokeWidth={2.400}>
            <path d="M2 2l8 8M32 30l-8 -8" />
            <path d="M12.500 1v11h-11zM20.500 19.500h11l-11 11z" fill="#dcdcdc" stroke="none" />
            <path d="M2 23c4 3 10 2 12 -4c3 -8 8 -13 17 -12" />
          </CollapseIcon>
        </HeaderRow>
        <Chart spec={spec} />
        <BottomBar>
          <ScrollTrack>
            <Arrow dir="left" ml={9} />
            {spec.active && (
              <ExpandButton>
                <svg width={16} height={20}>
                  <path d="M0 2h16v4H0zM8 9l8 11H0z" fill="#e4e4e4" />
                </svg>
              </ExpandButton>
            )}
            <Thumb $w={spec.thumb.w} $ml={spec.active ? spec.thumb.ml : spec.thumb.ml + 8}>
              <svg width={11} height={12}>
                <path d="M1 0v12M5.500 0v12M10 0v12" stroke="#7a7a7a" strokeWidth={1.600} />
              </svg>
            </Thumb>
            <Arrow dir="left" ml={0} />
            <Arrow dir="right" ml={20} />
            <ToolIcon $ml={8} width={1} height={1} />
          </ScrollTrack>
          <BottomTools active={spec.active} />
        </BottomBar>
      </Main>
      <Tabs>
        {tabs.map(([name, h]) => (
          <Tab key={name} $h={h} $active={name === 'Chart'}>
            <TabLabel>{name}</TabLabel>
          </Tab>
        ))}
      </Tabs>
    </Body>
  </Window>
)

const Grip = () => (
  <svg width={4} height={18}>
    <path d="M2 0v18" stroke="#8a8a8a" strokeWidth={3} strokeDasharray="2 2" />
  </svg>
)

const App: React.FC = () => (
  <>
    <GlobalStyle />
    <Screen>
      <Frame>
        <Strip>
          <StripPart $h={562} $pb={114}><Grip /></StripPart>
          <StripPart $h={112}>
            <svg width={8} height={12}><path d="M0 0v12L7 6z" fill="#8a8a8a" /></svg>
          </StripPart>
          <StripPart $h={679}><Grip /></StripPart>
        </Strip>
        <Windows>
          <TradingWindow spec={es} />
          <Divider />
          <TradingWindow spec={mes} />
        </Windows>
      </Frame>
      <EdgeColumn>
        <EdgePiece $h={44} $color="#b9c4cc" />
        <EdgePiece $h={18} $color="#777" />
      </EdgeColumn>
    </Screen>
  </>
)

export default App
